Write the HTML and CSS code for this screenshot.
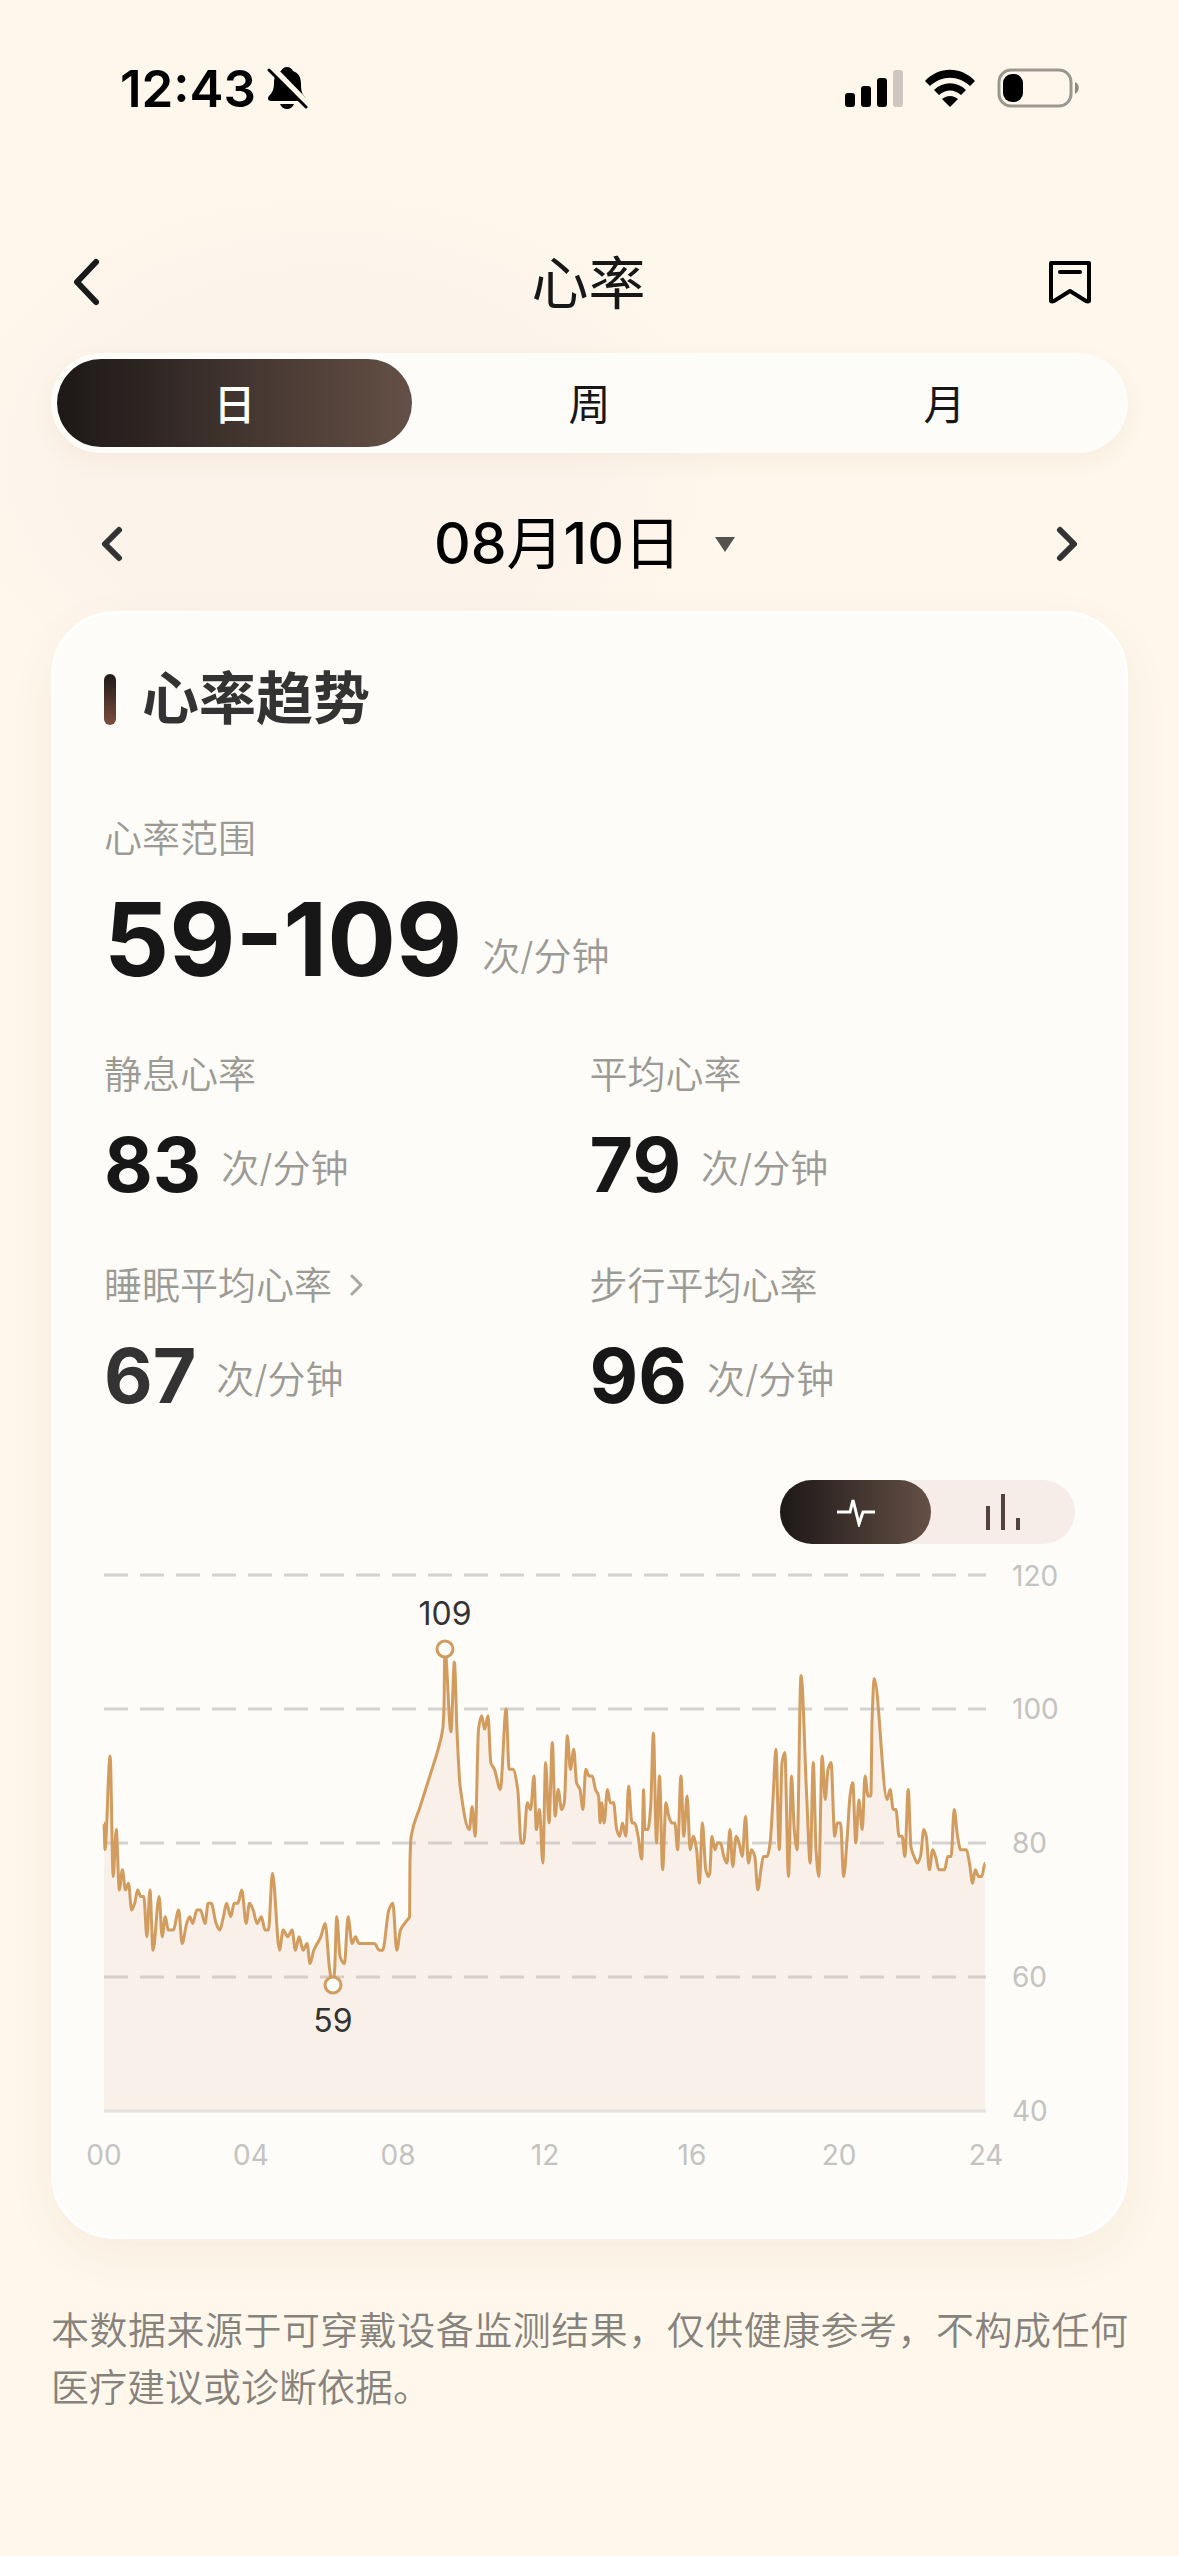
FILE: index.html
```html
<!DOCTYPE html>
<html lang="zh-CN">
  <head>
    <meta charset="UTF-8" />
    <meta name="viewport" content="width=device-width, initial-scale=1" />
    <title>心率</title>
    <link rel="stylesheet" href="styles.css">
  </head>

  <body>
    <div class="status-bar">
      <div class="status-left">
        <span>12:43</span>
        <svg width="42" height="44" viewBox="0 0 42 44">
          <path d="M20 1c3 0 5 2 6 4 6 2 8 7 8 13 0 7 1 10 4 13 2 2 1 4-1 4H4c-3 0-4-3-2-5 4-4 5-8 5-13 0-6 2-10 7-12 1-2 3-4 6-4zM13 38h14c-1 3-4 5-7 5s-6-2-7-5z" />
          <path d="M4 1l36 37" stroke="#fff7ec" stroke-width="7" />
          <path d="M2 4l37 37" stroke="#000" stroke-width="3" stroke-linecap="round" />
        </svg>
      </div>
      <div class="status-right">
        <svg width="58" height="38" viewBox="0 0 58 38">
          <rect x="0" y="24" width="10" height="14" rx="3" />
          <rect x="16" y="17" width="10" height="21" rx="3" />
          <rect x="32" y="9" width="10" height="29" rx="3" />
          <rect x="48" y="1" width="10" height="37" rx="3" fill="#cfc6bf" />
        </svg>
        <svg width="52" height="38" viewBox="0 0 52 38">
          <path d="M1 12C15-3 37-3 51 12l-5 5C34 6 18 6 6 17z" />
          <path d="M10 21c9-9 23-9 32 0l-5 5c-7-6-15-6-22 0z" />
          <path d="M18 30c5-4 11-4 16 0l-8 8z" />
        </svg>
        <svg width="84" height="40" viewBox="0 0 84 40">
          <rect x="2" y="2" width="72" height="36" rx="12" fill="none" stroke="#9b978f" stroke-width="3" />
          <rect x="6" y="6" width="20" height="28" rx="9" />
          <path d="M78 14c5 2 5 9 0 12z" fill="#8d8983" />
        </svg>
      </div>
    </div>

    <main>
      <header class="nav">
        <button class="icon-btn" aria-label="返回">
          <svg width="30" height="50" viewBox="0 0 30 50"><path d="M25 5L6 25l19 20" class="stroke-thick" /></svg>
        </button>
        <h1>心率</h1>
        <button class="icon-btn" aria-label="收藏">
          <svg width="44" height="44" viewBox="0 0 44 44">
            <path d="M3 3h38v38q-1 1-3 0L22 31 6 41q-2 1-3 0z" class="stroke-mark" />
            <path d="M12 12h20" class="stroke-mark" />
          </svg>
        </button>
      </header>

      <div class="tabs">
        <button class="active">日</button>
        <button>周</button>
        <button>月</button>
      </div>

      <div class="date-row">
        <button class="icon-btn" aria-label="前一天">
          <svg width="24" height="38" viewBox="0 0 24 38"><path d="M19 5L5 19l14 14" class="stroke-day" /></svg>
        </button>
        <button class="date">
          <span>08<i>月</i>10<i>日</i></span>
          <svg width="20" height="15" viewBox="0 0 20 15"><path d="M0 0h20L10 15z" fill="#55524e" /></svg>
        </button>
        <button class="icon-btn" aria-label="后一天">
          <svg width="24" height="38" viewBox="0 0 24 38"><path d="M5 5l14 14L5 33" class="stroke-day" /></svg>
        </button>
      </div>

      <section class="card">
        <h2>心率趋势</h2>

        <div class="metric">
          <div class="label">心率范围</div>
          <div class="value big">59-109 <span>次/分钟</span></div>
        </div>

        <div class="metrics">
          <div class="metric">
            <div class="label">静息心率</div>
            <div class="value">83 <span>次/分钟</span></div>
          </div>
          <div class="metric">
            <div class="label">平均心率</div>
            <div class="value">79 <span>次/分钟</span></div>
          </div>
          <div class="metric">
            <a href="#" class="label">睡眠平均心率
              <svg width="14" height="24" viewBox="0 0 14 24"><path d="M2 3l9 9-9 9" fill="none" stroke="#a8a7a1" stroke-width="3" stroke-linecap="round" stroke-linejoin="round" /></svg>
            </a>
            <div class="value soft">67 <span>次/分钟</span></div>
          </div>
          <div class="metric">
            <div class="label">步行平均心率</div>
            <div class="value">96 <span>次/分钟</span></div>
          </div>
        </div>

        <div class="switch">
          <button class="active" aria-label="折线图">
            <svg width="40" height="30" viewBox="0 0 40 30"><path d="M1 15h13l3-12 6 24 4-12h12" fill="none" stroke="#fff" stroke-width="3" /></svg>
          </button>
          <button aria-label="柱状图">
            <svg width="36" height="38" viewBox="0 0 36 38"><path d="M3 13v24M18 1v36M33 25v12" stroke="#54443e" stroke-width="4" /></svg>
          </button>
        </div>

        <svg class="chart" viewBox="0 0 971 615">
          <g class="grid">
            <path d="M0 15h882M0 149h882M0 283h882M0 417h882" />
          </g>
          <path id="area" />
          <path d="M0 551h882" class="axis" />
          <path id="line" />
          <circle cx="341" cy="89" r="8" class="dot" />
          <circle cx="229" cy="425" r="8" class="dot" />
          <text x="341" y="65" class="peak">109</text>
          <text x="229" y="472" class="peak">59</text>
          <g class="y-labels">
            <text x="908" y="26">120</text>
            <text x="908" y="159">100</text>
            <text x="908" y="293">80</text>
            <text x="908" y="427">60</text>
            <text x="908" y="561">40</text>
          </g>
          <g class="x-labels">
            <text x="0" y="605">00</text>
            <text x="147" y="605">04</text>
            <text x="294" y="605">08</text>
            <text x="441" y="605">12</text>
            <text x="588" y="605">16</text>
            <text x="735" y="605">20</text>
            <text x="882" y="605">24</text>
          </g>
        </svg>
      </section>

      <p class="note">本数据来源于可穿戴设备监测结果，仅供健康参考，不构成任何医疗建议或诊断依据。</p>
    </main>

    <script src="chart.js"></script>
  </body>
</html>
```

FILE: styles.css
```css
* {
  box-sizing: border-box;
}

body {
  margin: 0;
  min-height: 100vh;
  background: radial-gradient(ellipse 400px 280px at 28% 460px, #fcf3ea 60%, rgba(252, 243, 234, 0)) no-repeat #fff7ec;
  font-family: Inter, "Noto Sans CJK SC", sans-serif;
  color: #171717;
}

button {
  margin: 0;
  padding: 0;
  border: none;
  background: none;
  font: inherit;
  color: inherit;
  cursor: pointer;
}

svg {
  display: block;
}

main {
  padding: 0 51px;
}

.status-bar {
  display: flex;
  justify-content: space-between;
  align-items: center;
  height: 176px;
  padding: 0 98px 0 120px;
  font-size: 51px;
  font-weight: 600;
  color: #000;
}

.status-left {
  display: flex;
  align-items: center;
  gap: 11px;
}

.status-right {
  display: flex;
  align-items: center;
  gap: 21px;
}

.nav {
  display: grid;
  grid-template-columns: 1fr auto 1fr;
  align-items: center;
  height: 142px;
  margin-top: 35px;
  padding: 0 36px 0 20px;
}

.nav h1 {
  margin: 0;
  padding: 4px 0 0 14px;
  font-size: 57px;
  line-height: 60px;
  font-weight: 400;
}

.nav .icon-btn:last-child {
  justify-self: end;
}

.nav .icon-btn:first-child {
  justify-self: start;
}

.stroke-thick,
.stroke-mark,
.stroke-day {
  fill: none;
  stroke: #1a1a1a;
  stroke-width: 6;
  stroke-linecap: round;
  stroke-linejoin: round;
}

.stroke-mark {
  stroke: #000;
  stroke-width: 4;
}

.stroke-day {
  stroke: #333;
}

.tabs {
  display: grid;
  grid-template-columns: 1fr 1fr 1fr;
  height: 100px;
  padding: 6px;
  border-radius: 50px;
  background: #fdfcf9;
  box-shadow: 0 8px 24px rgba(120, 80, 40, 0.06);
  font-size: 42px;
}

.tabs button {
  padding-bottom: 4px;
  border-radius: 44px;
}

.tabs .active,
.switch .active {
  background: linear-gradient(90deg, #1d1917, #2e2523 25%, #41342e 50%, #645046);
  color: #fff;
}

.tabs .active {
  font-weight: 500;
}

.date-row {
  display: flex;
  justify-content: space-between;
  align-items: center;
  height: 158px;
  padding: 24px 49px 0;
}

.date {
  display: flex;
  align-items: center;
  gap: 34px;
  padding-right: 10px;
  font-size: 57px;
  line-height: 60px;
  font-weight: 500;
  color: #000;
}

.date i {
  font-style: normal;
  font-weight: 400;
}

.card {
  padding: 55px 50px 61px;
  border: 3px solid #fff;
  border-radius: 64px;
  background: #fdfcf8;
  box-shadow: 0 16px 48px rgba(120, 80, 40, 0.06);
}

.card h2 {
  display: flex;
  align-items: center;
  gap: 26px;
  margin: 0 0 82px;
  font-size: 57px;
  line-height: 60px;
  font-weight: 600;
  color: #333;
}

.card h2::before {
  content: "";
  width: 12px;
  height: 51px;
  border-radius: 6px;
  background: linear-gradient(#1d1917, #7d4f3e);
}

.label {
  display: flex;
  align-items: center;
  gap: 18px;
  font-size: 38px;
  line-height: 54px;
  font-weight: 350;
  color: #9b9a94;
  text-decoration: none;
}

.value {
  display: flex;
  align-items: center;
  gap: 20px;
  margin-top: 26px;
  font-size: 75px;
  line-height: 76px;
  font-weight: 700;
}

.value span {
  padding-top: 6px;
  font-size: 38px;
  line-height: 54px;
  font-weight: 350;
  color: #9b9a94;
}

.big {
  align-items: flex-end;
  font-size: 102px;
  line-height: 96px;
}

.big span {
  padding: 0 0 4px;
}

.soft {
  color: #333;
}

.metrics {
  display: grid;
  grid-template-columns: 1fr 1fr;
  row-gap: 55px;
  margin-top: 60px;
}

.switch {
  display: grid;
  grid-template-columns: 151px 1fr;
  width: 295px;
  height: 64px;
  margin: 66px 0 16px auto;
  border-radius: 32px;
  background: #f7ede8;
}

.switch button {
  display: flex;
  justify-content: center;
  align-items: center;
  border-radius: 32px;
}

.chart {
  width: 100%;
  overflow: visible;
}

.grid {
  stroke: #d3d2cf;
  stroke-width: 3;
  stroke-dasharray: 24 12;
}

.axis {
  stroke: #e5e2df;
  stroke-width: 3;
}

#area {
  fill: rgba(228, 190, 165, 0.18);
}

#line {
  fill: none;
  stroke: #d39c5f;
  stroke-width: 3;
  stroke-linejoin: round;
}

.dot {
  fill: #fff;
  stroke: #d39c5f;
  stroke-width: 3;
}

.peak {
  font-size: 32px;
  text-anchor: middle;
  fill: #333;
}

.y-labels,
.x-labels {
  font-size: 28px;
  fill: #c3c3c1;
}

.x-labels {
  text-anchor: middle;
}

.note {
  margin: 63px 0 0;
  font-size: 38px;
  line-height: 57px;
  font-weight: 350;
  text-align: justify;
  color: #86827c;
}
```

FILE: chart.js
```js
// [5-minute slot of the day, bpm]
const samples = [
  [0, 83], [0.3, 79], [2, 93], [3, 75], [4, 82], [5, 73], [6, 76], [7, 73], [8, 74], [9, 70],
  [10, 71], [11, 73], [12, 72], [13, 72], [14, 66], [15, 73], [16, 64], [18, 72], [19, 66], [20, 69],
  [21, 67], [22.6, 67], [24.4, 70], [25.5, 65], [27, 68], [28, 69], [29, 68], [30.3, 70], [31.5, 70], [33, 68],
  [34, 71], [35, 71], [36.6, 68], [37.8, 67], [39, 69], [40, 71], [41.4, 69], [42.5, 71], [43.7, 71], [45, 73],
  [46.4, 68], [47.5, 71], [48.7, 70], [50, 68], [51.4, 69], [52.6, 67], [53.7, 67], [55, 75.5], [57.3, 64], [58.5, 67],
  [60, 66], [61.4, 67], [62.5, 64], [63.7, 66], [65, 64], [66.3, 65], [67.3, 62], [68.5, 64], [70.8, 66], [72.2, 68],
  [73.7, 61], [74.7, 59], [75.3, 61], [76, 69], [77.1, 63], [78.5, 62], [79.7, 69], [81, 65], [82.1, 66], [83.3, 65],
  [88.3, 65], [89.9, 64], [91, 64], [93, 70], [94.3, 71], [95.6, 64], [96.8, 67], [99, 68.5], [99.8, 69], [99.9, 77],
  [100.3, 81], [103.2, 85.4], [106.4, 90], [109.1, 94], [110.6, 97], [111, 100], [111.3, 109], [113.3, 96.6], [114.4, 107], [115.3, 96.3],
  [116.3, 88.4], [119.3, 82], [120.2, 85.4], [121.2, 81], [122.3, 97], [123.3, 99], [124.3, 97], [125.4, 99], [126.3, 92], [127.5, 91],
  [129.4, 88], [131.3, 100], [132.3, 91], [133.5, 91], [135.1, 88], [136.2, 80], [137, 80], [138.2, 86], [139.3, 85], [140.4, 90],
  [141.2, 82], [142.2, 85], [143.3, 77], [144.2, 92], [145.3, 83], [146.4, 95], [147.3, 84], [148.3, 88], [149.4, 85], [150.3, 86],
  [151.3, 96], [152.3, 91], [153.4, 94], [154.3, 89], [155.4, 88], [156.4, 85], [157.3, 91], [158.4, 90], [159.4, 90], [160.5, 88],
  [161.5, 87], [162, 83], [162.5, 86], [163.3, 83], [164.4, 88], [165.3, 86], [166.4, 86], [167.4, 82], [168.4, 81], [169.3, 83],
  [170.4, 81], [171.3, 88.5], [172.4, 83], [173.3, 83], [174.4, 81], [175.6, 77.6], [176.2, 88], [176.6, 82], [177.6, 82], [178.5, 85.4],
  [179.4, 96.4], [180.4, 80], [181.4, 90], [182.4, 76], [183.5, 86], [184.4, 84], [185.4, 83], [186.4, 83], [187.3, 79], [188.4, 90],
  [189.3, 81], [190.4, 87], [191.4, 79], [192.4, 81], [193.5, 79], [194.4, 74], [195.4, 83], [196.5, 76], [197.3, 75], [197.8, 75.5],
  [198.5, 81], [199.5, 79], [200.3, 80], [201.3, 80], [202.4, 78], [203.4, 77], [204.4, 82], [205.3, 76.5], [206.4, 81], [207.4, 80],
  [208.4, 78], [209.5, 84], [210.4, 77], [211.4, 79], [212.5, 78], [213.5, 73], [214.5, 76], [215.3, 78], [216.5, 78], [217.5, 80],
  [218.5, 87], [219.4, 94], [220.5, 79], [221.4, 92], [222.3, 93.5], [223.5, 75], [224.5, 90], [225.4, 82], [226.3, 79], [227.6, 105],
  [229.4, 87.5], [230.6, 77], [231.6, 92], [232.5, 79], [233.4, 75], [234.5, 93], [235.5, 86.5], [236.4, 91], [237.4, 92], [238.6, 81],
  [239.4, 83], [240.5, 83], [241.5, 75], [242.7, 81], [243.6, 87], [244.5, 89], [245.5, 80], [246.5, 86.4], [247.6, 82], [248.5, 90],
  [249.5, 87], [250.4, 87], [250.8, 98.3], [251.5, 104.5], [255.7, 86.5], [256.7, 88], [257.7, 85], [258.6, 85], [259.6, 81], [260.6, 81],
  [261.5, 78], [262.6, 88], [263.5, 79.4], [264.5, 78], [265.6, 77], [266.6, 78], [267.7, 82], [268.5, 81], [269.5, 76], [270.6, 79],
  [271.5, 78], [272.6, 76], [274.5, 76], [275.5, 78], [276.6, 78], [277.6, 85], [278.7, 81], [279.7, 79], [281.6, 79], [282.6, 77],
  [283.6, 74], [284.5, 76], [285.6, 75], [286.6, 75], [287.7, 77],
];

const points = samples.map(([slot, bpm]) => [slot * 882 / 288, 551 - (bpm - 40) * 6.7]);

// flat at every peak and dip, so the curve never overshoots a sample
function slope(i) {
  if (i === 0 || i === points.length - 1) return 0;
  const [x0, y0] = points[i - 1];
  const [x1, y1] = points[i];
  const [x2, y2] = points[i + 1];
  const a = (y1 - y0) / (x1 - x0);
  const b = (y2 - y1) / (x2 - x1);
  return a * b <= 0 ? 0 : (2 * a * b) / (a + b);
}

let d = `M${points[0]}`;
for (let i = 1; i < points.length; i++) {
  const [x0, y0] = points[i - 1];
  const [x1, y1] = points[i];
  const dx = (x1 - x0) / 3;
  d += `C${x0 + dx},${y0 + slope(i - 1) * dx} ${x1 - dx},${y1 - slope(i) * dx} ${x1},${y1}`;
}

document.getElementById("line").setAttribute("d", d);
document.getElementById("area").setAttribute("d", `${d}V551H0Z`);
```
